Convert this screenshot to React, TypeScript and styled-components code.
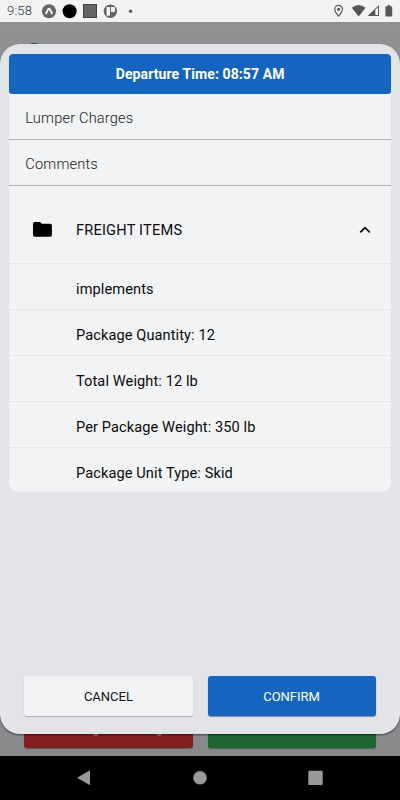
import React from "react";
import styled, { createGlobalStyle } from "styled-components";

const GlobalStyle = createGlobalStyle`
  * { box-sizing: border-box; }
  body { margin: 0; background: #000; font-family: Roboto, sans-serif; }
  button { font-family: inherit; border: 0; padding: 0; }
  svg { display: block; }
`;

const Screen = styled.div`
  width: 400px;
  height: 800px;
  display: flex;
  flex-direction: column;
  overflow: hidden;
`;

const StatusBar = styled.header`
  height: 22px;
  flex: none;
  display: flex;
  align-items: center;
  justify-content: space-between;
  padding: 0 6px 0 7px;
  background: #f1f3f5;
  color: #555;
`;

const StatusGroup = styled.div`
  display: flex;
  align-items: center;
  height: 22px;
`;

const Clock = styled.span`
  width: 35px;
  font-size: 13px;
  line-height: 24px;
  letter-spacing: 0.2px;
  font-weight: 300;
  color: #333;
`;

const Stage = styled.main`
  position: relative;
  flex: 1;
  display: flex;
  flex-direction: column;
  justify-content: space-between;
  background: linear-gradient(#909193, #88898b);
`;

const AvatarPeek = styled.div`
  width: 20px;
  height: 20px;
  margin: 20.8px 0 0 23.5px;
  border-radius: 50%;
  background: #243e5e;
`;

const ActionRow = styled.div`
  display: grid;
  grid-template-columns: 1fr 1fr;
  gap: 15px;
  padding: 0 24.4px;
`;

const HiddenActions = styled(ActionRow)`
  padding-bottom: 8px;
`;

const HiddenAction = styled.div<{ $color: string }>`
  height: 41px;
  border-radius: 3px;
  background: ${(p) => p.$color};
  box-shadow: 0 1px 1px rgba(0, 0, 0, 0.35);
`;

const Sheet = styled.section`
  position: absolute;
  inset: 22px 0 22px;
  display: flex;
  flex-direction: column;
  justify-content: space-between;
  padding: 9.5px 9px 18px;
  border-radius: 20px;
  background: #e3e4e8;
  box-shadow: 0 1px 2px rgba(0, 0, 0, 0.55);
`;

const Card = styled.div`
  height: 438.5px;
  border-radius: 4px 4px 9px 9px;
  background: #f1f3f5;
  overflow: hidden;
`;

const CardTitle = styled.h1`
  margin: 0 0 0 0.3px;
  height: 40.5px;
  border-radius: 3px;
  background: #1565c0;
  color: #fff;
  font-size: 14px;
  font-weight: 700;
  line-height: 41px;
  letter-spacing: 0.1px;
  text-align: center;
`;

const Field = styled.div`
  height: 46px;
  padding-left: 16.3px;
  border-bottom: 1px solid #b1b3b4;
  color: #18191a;
  font-size: 14.6px;
  font-weight: 300;
  line-height: 49px;
  letter-spacing: 0.18px;
`;

const SectionHeader = styled.div`
  height: 78px;
  display: flex;
  align-items: center;
  padding: 10px 19px 0 24px;
  border-bottom: 1.5px solid #e5e6e8;
`;

const SectionTitle = styled.h2`
  flex: 1;
  margin: 1px 0 0 24px;
  color: #0b0b0c;
  font-size: 14.6px;
  font-weight: 400;
  line-height: 20px;
  letter-spacing: 0.2px;
`;

const Item = styled.div`
  height: 46px;
  padding-left: 67px;
  border-bottom: 1.5px solid #e5e6e8;
  color: #0b0b0c;
  font-size: 14.6px;
  line-height: 50px;
  letter-spacing: 0.09px;
`;

const SheetActions = styled(ActionRow)`
  padding: 0 15.4px;
`;

const Button = styled.button<{ $primary?: boolean }>`
  height: 40px;
  border-radius: 3px;
  background: ${(p) => (p.$primary ? "#1565c0" : "#f1f3f5")};
  color: ${(p) => (p.$primary ? "#fff" : "#151516")};
  font-size: 13px;
  line-height: 42px;
  box-shadow: 0 1px 1px ${(p) => (p.$primary ? "rgba(30, 50, 100, .5)" : "rgba(0, 0, 0, .22)")};
`;

const NavBar = styled.nav`
  height: 44px;
  flex: none;
  display: flex;
  align-items: center;
  justify-content: center;
  background: #000;
`;

const FREIGHT = [
  "implements",
  "Package Quantity: 12",
  "Total Weight: 12 lb",
  "Per Package Weight: 350 lb",
  "Package Unit Type: Skid",
];

const NotificationIcons = () => (
  <svg width="94" height="22" viewBox="42 0 94 22">
    <circle cx="49" cy="11.3" r="7" fill="#656565" />
    <path d="M45.8 14 L48.2 9.2 Q49 8 49.8 9.2 L52.2 14" fill="none" stroke="#fff" strokeWidth="1.8" />
    <circle cx="69.6" cy="11.3" r="7" fill="#000" />
    <rect x="83.5" y="4.5" width="13" height="13" fill="#656565" stroke="#414141" strokeWidth="1" />
    <circle cx="110.4" cy="11.3" r="6.7" fill="#656565" />
    <path d="M106.6 7h3.4v8.7h-3.4z M111 7h3.2q.8 0 .8.8v3.4q0 .8-.8.8H111z" fill="#f1f3f5" />
    <circle cx="130.6" cy="11.3" r="1.8" fill="#626262" />
  </svg>
);

const SystemIcons = () => (
  <svg width="62" height="22" viewBox="332 0 62 22">
    <path d="M338.6 16.2 Q334.8 11.7 334.8 9.2 A3.8 3.8 0 0 1 342.4 9.2 Q342.4 11.7 338.6 16.2Z" fill="none" stroke="#565656" strokeWidth="1.1" />
    <circle cx="338.6" cy="9.2" r="1.5" fill="#565656" />
    <path d="M351.8 7.8 Q358.7 2.4 365.6 7.8 L358.7 16.4Z" fill="#565656" />
    <path d="M367.5 16 L379 5 V16Z" fill="#565656" />
    <path d="M375.3 9.7 L378 7.2 V15 H375.3Z" fill="#f1f3f5" />
    <path d="M387.6 5h2.4v1.3h1.3q.9 0 .9.9v8.4q0 .9-.9.9h-5q-.9 0-.9-.9V7.2q0-.9.9-.9h1.3z" fill="#565656" />
  </svg>
);

const Folder = () => (
  <svg width="19" height="15" viewBox="0 0 19 15">
    <path d="M1.8 0H7l1.8 1.8h8.4q1.7 0 1.7 1.7v9.6q0 1.7-1.7 1.7H1.8Q0 14.8 0 13.1V1.8Q0 0 1.8 0Z" fill="#000" />
  </svg>
);

const ChevronUp = () => (
  <svg width="14" height="8" viewBox="0 0 14 8">
    <path d="M2.2 6.4 L7 1.7 L11.8 6.4" fill="none" stroke="#000" strokeWidth="1.6" />
  </svg>
);

const Descenders = () => (
  <svg width="168" height="41" viewBox="24 707 168 41">
    <path d="M93.2 733.5 Q96 736.6 98.4 733.5 M156.9 733.5 Q159.6 736.6 162 733.5" fill="none" stroke="#a9a0a2" strokeWidth="1.3" />
  </svg>
);

const NavIcons = () => (
  <svg width="250" height="44" viewBox="75 756 250 44">
    <path d="M77 777.7 L90 770.2 V785.2Z" fill="#999" />
    <circle cx="200" cy="777.7" r="6.8" fill="#999" />
    <rect x="308.3" y="770.7" width="14.4" height="14.4" rx="1" fill="#999" />
  </svg>
);

export default function App() {
  return (
    <Screen>
      <GlobalStyle />
      <StatusBar>
        <StatusGroup>
          <Clock>9:58</Clock>
          <NotificationIcons />
        </StatusGroup>
        <SystemIcons />
      </StatusBar>
      <Stage>
        <AvatarPeek />
        <HiddenActions>
          <HiddenAction $color="#841f1f">
            <Descenders />
          </HiddenAction>
          <HiddenAction $color="#1e6532" />
        </HiddenActions>
        <Sheet>
          <Card>
            <CardTitle>Departure Time: 08:57 AM</CardTitle>
            <Field>Lumper Charges</Field>
            <Field>Comments</Field>
            <SectionHeader>
              <Folder />
              <SectionTitle>FREIGHT ITEMS</SectionTitle>
              <ChevronUp />
            </SectionHeader>
            {FREIGHT.map((line) => (
              <Item key={line}>{line}</Item>
            ))}
          </Card>
          <SheetActions>
            <Button>CANCEL</Button>
            <Button $primary>CONFIRM</Button>
          </SheetActions>
        </Sheet>
      </Stage>
      <NavBar>
        <NavIcons />
      </NavBar>
    </Screen>
  );
}
